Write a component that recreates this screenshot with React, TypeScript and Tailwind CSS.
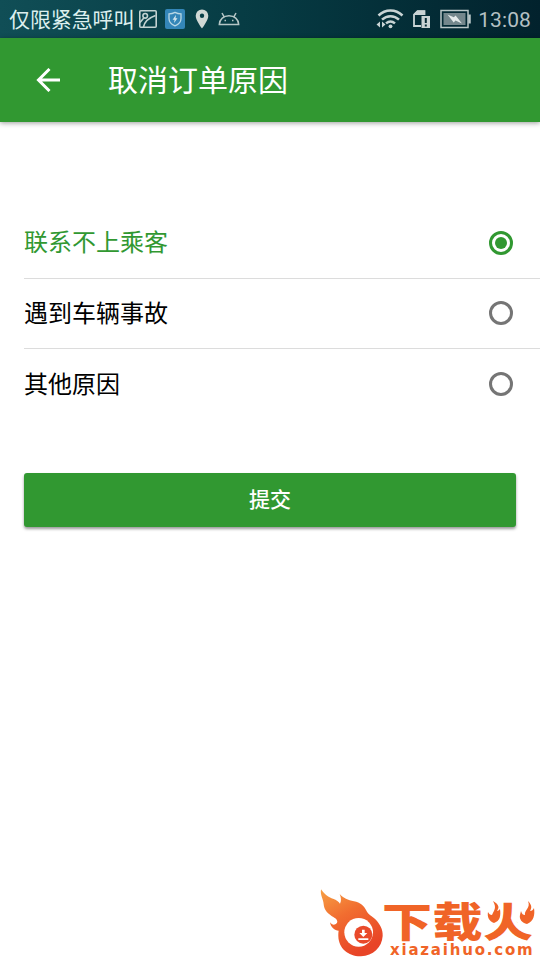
import { useState } from "react";

const REASONS = ["联系不上乘客", "遇到车辆事故", "其他原因"];

function StatusBar() {
  return (
    <div className="flex h-[38px] shrink-0 items-center bg-gradient-to-r from-[#104e56] via-[#063a42] to-[#02222d] pl-[9px] pr-[9px] text-[#dcefee]">
      <span className="pt-[2px] text-[21px] leading-[36px] tracking-[-0.1px]">仅限紧急呼叫</span>
      <svg className="ml-[5px]" width="18" height="18" viewBox="0 0 18 18" fill="none" stroke="#c3d3d2" strokeWidth="1.6">
        <rect x="0.8" y="0.8" width="16.4" height="16.4" rx="1" />
        <circle cx="6.2" cy="5.8" r="2.3" />
        <path d="M4.500 17C5.500 11.500 9.500 8 16.500 5.500M1 12.500 4.800 8" />
      </svg>
      <svg className="ml-[8px]" width="20" height="20" viewBox="0 0 20 20" fill="none">
        <rect width="20" height="20" rx="2" fill="#3486b8" />
        <path d="M10 3.4c1.8 1 3.7 1.5 6 1.5v4.6c0 3.6-2.3 5.9-6 7.4-3.7-1.5-6-3.8-6-7.4V4.9c2.3 0 4.2-.5 6-1.5z" stroke="#b9d8e5" strokeWidth="1.3" />
        <path d="M11 5.8 7.6 10.700h2L9 14l3.500-4.800h-2z" fill="#d5e8ee" />
      </svg>
      <svg className="ml-[10px]" width="14" height="20" viewBox="0 0 14 20" fill="#d0d8d5">
        <path fillRule="evenodd" d="M7 .5A6.300 6.300 0 0 0 .7 6.800C.7 11.500 7 19.500 7 19.500s6.300-8 6.300-12.700A6.300 6.300 0 0 0 7 .5zm0 4a2.200 2.200 0 1 1 0 4.400 2.200 2.200 0 0 1 0-4.400z" />
      </svg>
      <svg className="ml-[9px]" width="22" height="14" viewBox="0 0 22 14" fill="none" stroke="#b5c6c6" strokeWidth="1.5">
        <path d="M1.300 12.500c.3-5.300 4.300-8.800 9.700-8.800s9.400 3.500 9.700 8.800zM6 4.600 4 1M16 4.600 18 1" />
        <path d="M6.500 8.500H8M14 8.500h1.500" strokeWidth="1.700" />
      </svg>
      <div className="ml-auto flex items-center">
        <svg width="29" height="20" viewBox="0 0 29 20" fill="none" stroke="#c9d4d5" strokeWidth="2.5">
          <path d="M2.500 6.500c7-6.700 17-6.700 24 0M6 10.700c5-4.700 12-4.700 17 0M10 14.400c2.700-2.300 6.300-2.300 9 0" />
          <circle cx="14.500" cy="17.300" r="1.900" fill="#c9d4d5" stroke="none" />
          <path d="M4 12.500v6L.5 15.500zM6 12.500v6L9.500 15.500z" fill="#c9d4d5" stroke="none" />
        </svg>
        <svg className="ml-[7px]" width="19" height="20" viewBox="0 0 19 20">
          <path d="M12.500 6V2.200H5.500L2 5.700V17h7" fill="none" stroke="#c9d4d5" strokeWidth="1.800" />
          <path d="M5.500 1.500H13V6H2V5z" fill="#c9d4d5" />
          <rect x="9.500" y="7" width="8.500" height="12" fill="#c9d4d5" />
          <path d="M13.800 9v5M13.800 15.500v2" stroke="#062b35" strokeWidth="2" />
        </svg>
        <svg className="ml-[9px]" width="31" height="20" viewBox="0 0 31 20">
          <rect x="1" y="1.500" width="27" height="17" fill="none" stroke="#bac7c8" strokeWidth="1.500" />
          <rect x="3.500" y="4" width="22" height="12" fill="#74878c" />
          <path d="M29.500 5.500v9" stroke="#bac7c8" strokeWidth="2.500" />
          <path d="M7.500 5.500 13.800 8.300 15.600 6.500 22 14.600 15.500 11.600 13.700 13.500z" fill="#e4eaea" />
        </svg>
        <span className="ml-[7px] pt-[2px] font-[Roboto] text-[21px] leading-[36px] tracking-[0.1px] text-[#b4c0c3]">13:08</span>
      </div>
    </div>
  );
}

function Radio({ checked }: { checked: boolean }) {
  return (
    <span
      className={`flex size-6 items-center justify-center rounded-full border-3 ${
        checked ? "border-[#319831]" : "border-[#757575]"
      }`}
    >
      {checked && <span className="size-3 rounded-full bg-[#319831]" />}
    </span>
  );
}

function SiteLogo() {
  return (
    <div className="flex h-[75px] w-[225px]">
      <svg className="shrink-0" width="75" height="75" viewBox="0 0 225 225">
        <defs>
          <linearGradient id="flame" x1="0" y1="0" x2="0.5" y2="1">
            <stop offset="0" stopColor="#f7a044" />
            <stop offset="0.45" stopColor="#f16d30" />
            <stop offset="1" stopColor="#e84427" />
          </linearGradient>
        </defs>
        <path
          fill="url(#flame)"
          d="M18 13C30 31 43 38 54 41C65 44 71 50 75 56C80 46 78 38 74 27C85 40 99 45 117 49C136 52 147 63 153 75C161 91 169 91 181 103C195 117 204 134 203 153C201 187 174 213 138 214C101 215 71 191 70 154C70 147 70 142 71 137C59 137 47 127 45 112C51 121 60 121 65 115C70 109 65 102 56 97C39 87 27 75 26 58C25 41 15 32 18 13Z"
        />
        <circle cx="131" cy="142" r="43" fill="#fff" />
        <circle cx="145" cy="149" r="27" fill="#e94a2b" />
        <path fill="#fff" d="M141 134h8v10h8l-12 12-12-12h8zM130 160h30v5h-30z" />
      </svg>
      <div className="relative flex flex-col pt-[14px]">
        <span className="-ml-2 h-[44px] origin-top scale-y-[0.81] font-['Noto_Sans_CJK_SC'] text-[50px] font-black leading-[50px] tracking-[0.5px] text-[#f06427]">
          下载火
        </span>
        {/* flames over the two dots of the last character */}
        <svg className="absolute left-[94px] top-[15px]" width="51" height="27" viewBox="-3 0 51 27">
          <path d="M-3 2H13V17L10 24H-3zM28 2H48V25H33L28 20z" fill="#fff" />
          <path d="M28.500 18H34V24H31.500z" fill="#fff" />
          <g fill="#f06427">
            <path d="M6 1C13 5 12 8 10 11C11 11 12 10 13 9C14 16 13 21 7 23C2 21 0 17 1 12C2 14 3 15 5 15C7 10 10 8 6 1Z" />
            <path d="M41 1C46 6 44 9 43 11C45 11 46 10 47 8C48 15 47 21 40 24C35 23 32 19 33 15L34 11C35 14 36 15 38 15C37 10 44 8 41 1Z" />
          </g>
        </svg>
        <span className="font-['DejaVu_Sans'] text-[15px] font-bold leading-[15px] tracking-[1.8px] text-[#f06427]">xiazaihuo.com</span>
      </div>
    </div>
  );
}

export default function App() {
  const [selected, setSelected] = useState(0);

  return (
    <div className="flex h-[960px] w-[540px] flex-col overflow-hidden bg-white font-[Roboto,'Noto_Sans_CJK_SC',sans-serif]">
      <StatusBar />

      <header className="flex h-[84px] shrink-0 items-center bg-[#319831] text-white shadow-[0_1px_5px_rgba(0,0,0,0.4)]">
        <button className="ml-[36px]" aria-label="返回">
          <svg width="24" height="24" viewBox="0 0 24 24" fill="none" stroke="currentColor" strokeWidth="3">
            <path d="M24 12H2.500M13.500 1 2.500 12l11 11" />
          </svg>
        </button>
        <h1 className="ml-[48px] pt-[2px] text-[30px] leading-[40px]">取消订单原因</h1>
      </header>

      <main className="mt-[86px] flex flex-col">
        {/* Reason list */}
        <ul className="pl-6">
          {REASONS.map((reason, i) => (
            <li
              key={reason}
              onClick={() => setSelected(i)}
              className={`flex items-center justify-between pr-[27px] ${
                i < REASONS.length - 1 ? "h-[70.5px] border-b-[1.5px] border-[#dcdcdc]" : "h-[70px]"
              }`}
            >
              <span className={`pt-px text-2xl ${selected === i ? "text-[#319831]" : "text-black"}`}>{reason}</span>
              <Radio checked={selected === i} />
            </li>
          ))}
        </ul>

        <button className="mx-6 mt-[54px] h-[54px] rounded-[3px] bg-[#319831] pt-[2px] text-[21px] font-medium text-white shadow-[0_2px_3px_rgba(0,0,0,0.4)]">
          提交
        </button>
      </main>

      <footer className="mt-auto flex justify-end">
        <SiteLogo />
      </footer>
    </div>
  );
}
